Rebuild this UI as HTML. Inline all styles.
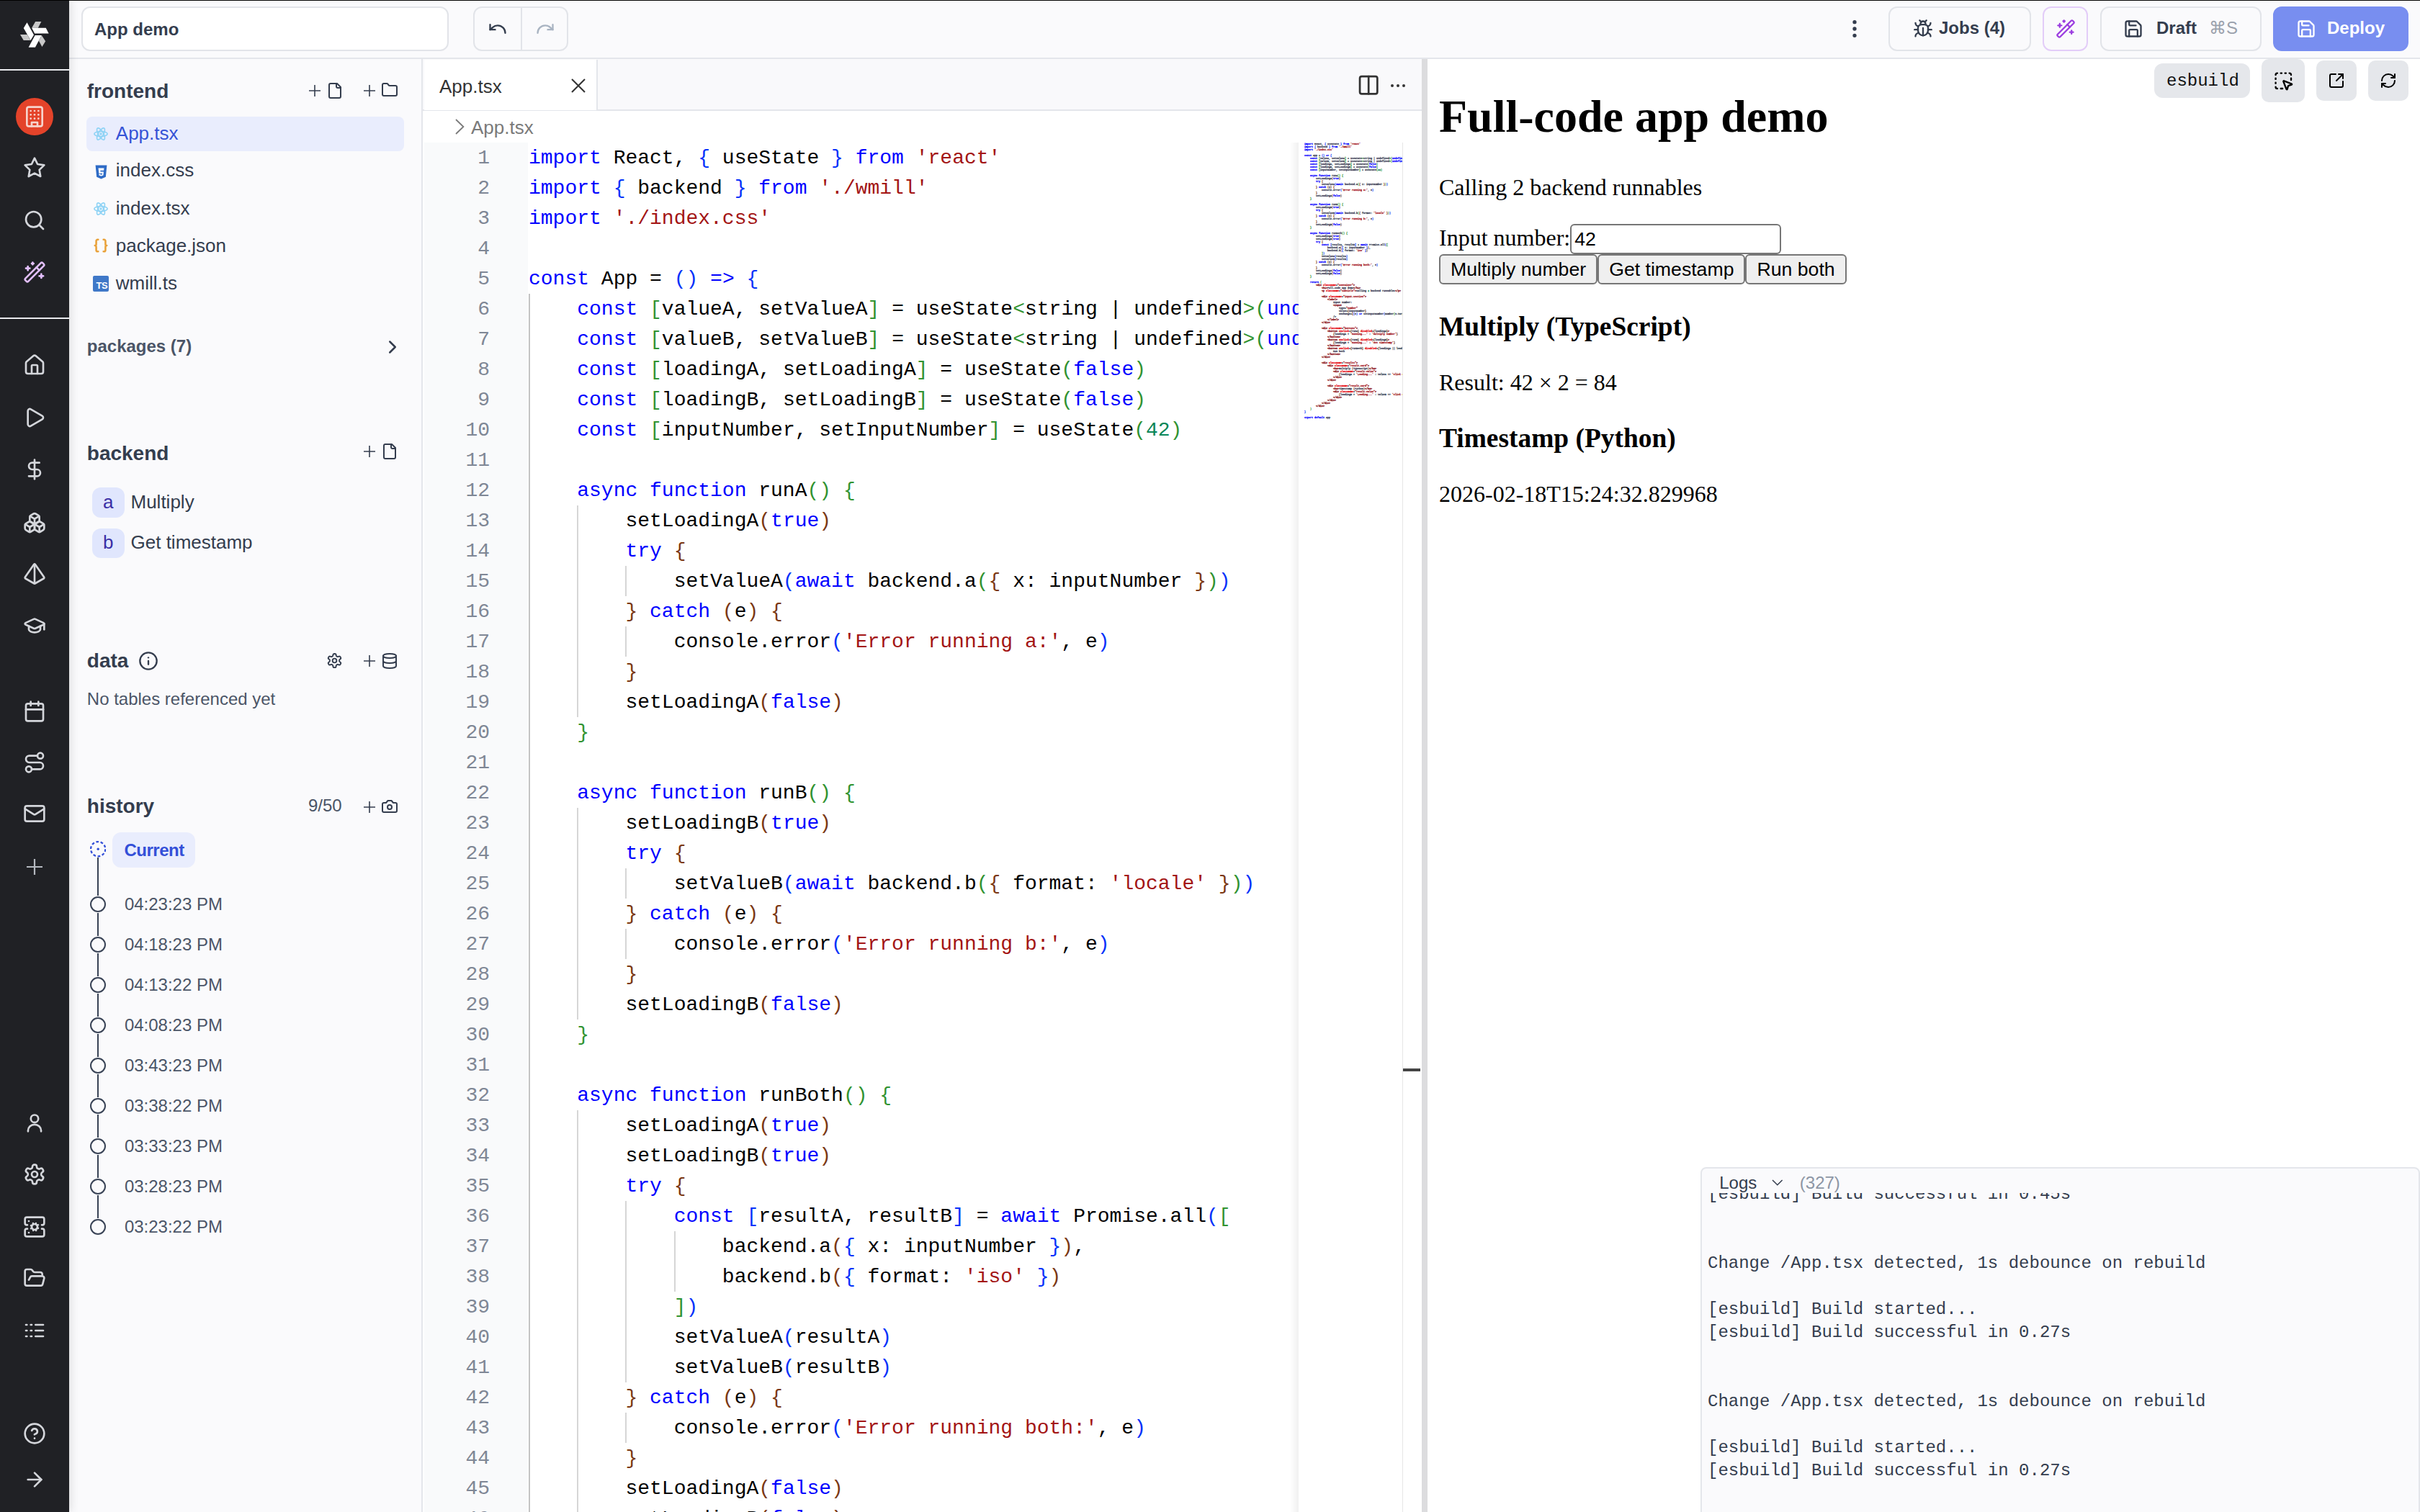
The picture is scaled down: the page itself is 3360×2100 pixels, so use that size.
<!DOCTYPE html><html><head><meta charset="utf-8"><style>html{overflow:hidden}
@media (min-width:2500px){html{zoom:2}}
*{box-sizing:border-box}
body{margin:0;width:1680px;height:1050px;overflow:hidden;position:relative;background:#fff;font-family:"Liberation Sans",sans-serif;color:#343d4e}
.abs{position:absolute}
span.abs{white-space:pre;line-height:16px}
svg.i{position:absolute;fill:none;stroke:currentColor;stroke-width:2;stroke-linecap:round;stroke-linejoin:round;overflow:visible}
#topline{position:absolute;left:0;top:0;width:1680px;height:.5px;background:#000;z-index:50}
#side{position:absolute;left:0;top:0;width:48px;height:1050px;background:#202125;color:#d4d6db;z-index:10;box-shadow:1px 0 6px rgba(0,0,0,.12)}
#side .sep{position:absolute;left:0;width:48px;height:1px;background:#e9eaee}
#topbar{position:absolute;left:48px;top:0;width:1632px;height:41px;background:#fafafc;border-bottom:1px solid #e4e6eb}
.btn{position:absolute;top:4.5px;height:31px;border:1px solid #e2e4e9;border-radius:6px;background:#fafafc}
#files{position:absolute;left:48px;top:41px;width:245.5px;height:1009px;background:#fafafc;border-right:1px solid #e4e6eb}
#editor{position:absolute;left:293.5px;top:41px;width:693.5px;height:1009px;background:#fff}
#splitter{position:absolute;left:987px;top:41px;width:4px;height:1009px;background:#dcdcde}
#preview{position:absolute;left:991px;top:41px;width:689px;height:1009px;background:#fff;overflow:hidden}
div.t{position:absolute;line-height:0;white-space:pre}
#pbody{position:absolute;left:0;top:0;right:0;margin:0 8px;font-family:"Liberation Serif",serif;font-size:16px;color:#000}
#pbody h1{font-size:32px;margin:21.44px 0;font-weight:bold}
#pbody p{margin:16px 0}
#pbody h3{font-size:18.72px;margin:18.72px 0;font-weight:bold}
#pbody .inp{display:inline-block;vertical-align:baseline;width:146.5px;height:21px;border:1px solid #767676;border-radius:3px;font-family:"Liberation Sans",sans-serif;font-size:13.333px;padding:1px 2px;line-height:17px;background:#fff}
#pbody .b{display:inline-block;height:21px;border:1px solid #767676;border-radius:3px;background:#efefef;font-family:"Liberation Sans",sans-serif;font-size:13.333px;padding:1px 7px;line-height:17px;margin-right:0}
#pbody .btns{font-size:0}
</style></head><body>
<div id="topline"></div><div class="abs" style="left:48px;top:.5px;width:1632px;height:.5px;background:#fff;z-index:49"></div>
<div id="side">
<svg class="abs" viewBox="0 0 1512 1512" style="left:5px;top:5px;width:40px;height:40px">
<g fill="#c8c8c8"><polygon points="740,378 895,378 810,545 645,545"/><polygon points="340,720 525,720 610,870 430,870"/><polygon points="905,740 1005,895 915,1040 830,885"/></g>
<g fill="#fff"><polygon points="645,545 1015,545 1090,690 720,690"/><polygon points="520,400 700,730 615,870 430,550"/><polygon points="730,735 905,735 735,1055 560,1055"/></g>
</svg>
<div class="sep" style="top:48px"></div>
<div class="abs" style="left:11px;top:68px;width:26px;height:26px;border-radius:50%;background:#e4432a"></div>
<svg class="i" viewBox="0 0 24 24" style="left:16.0px;top:73.0px;width:16px;height:16px;color:#f6d3cc;" stroke-width="2" ><rect width="16" height="20" x="4" y="2" rx="2" ry="2"/><path d="M9 22v-4h6v4"/><path d="M8 6h.01"/><path d="M16 6h.01"/><path d="M12 6h.01"/><path d="M12 10h.01"/><path d="M12 14h.01"/><path d="M16 10h.01"/><path d="M16 14h.01"/><path d="M8 10h.01"/><path d="M8 14h.01"/></svg>
<svg class="i" viewBox="0 0 24 24" style="left:16.0px;top:108.5px;width:16px;height:16px;" stroke-width="2" ><polygon points="12 2 15.09 8.26 22 9.27 17 14.14 18.18 21.02 12 17.77 5.82 21.02 7 14.14 2 9.27 8.91 8.26 12 2"/></svg>
<svg class="i" viewBox="0 0 24 24" style="left:16.0px;top:145.0px;width:16px;height:16px;" stroke-width="2" ><circle cx="11" cy="11" r="8"/><path d="m21 21-4.3-4.3"/></svg>
<svg class="i" viewBox="0 0 24 24" style="left:16.0px;top:180.75px;width:16px;height:16px;color:#e2bffd;" stroke-width="2" ><path d="m21.64 3.64-1.28-1.28a1.21 1.21 0 0 0-1.72 0L2.36 18.64a1.21 1.21 0 0 0 0 1.72l1.28 1.28a1.2 1.2 0 0 0 1.72 0L21.64 5.36a1.2 1.2 0 0 0 0-1.72"/><path d="m14 7 3 3"/><path d="M5 6v4"/><path d="M19 14v4"/><path d="M10 2v2"/><path d="M7 8H3"/><path d="M21 16h-4"/><path d="M11 3H9"/></svg>
<div class="sep" style="top:220.5px"></div>
<svg class="i" viewBox="0 0 24 24" style="left:16.0px;top:245.5px;width:16px;height:16px;" stroke-width="2" ><path d="M15 21v-8a1 1 0 0 0-1-1h-4a1 1 0 0 0-1 1v8"/><path d="M3 10a2 2 0 0 1 .709-1.528l7-5.999a2 2 0 0 1 2.582 0l7 5.999A2 2 0 0 1 21 10v9a2 2 0 0 1-2 2H5a2 2 0 0 1-2-2z"/></svg>
<svg class="i" viewBox="0 0 24 24" style="left:16.0px;top:282.0px;width:16px;height:16px;" stroke-width="2" ><path d="M5 5a2 2 0 0 1 3.008-1.728l11.997 6.998a2 2 0 0 1 .003 3.458l-12 7A2 2 0 0 1 5 19z"/></svg>
<svg class="i" viewBox="0 0 24 24" style="left:16.0px;top:318.0px;width:16px;height:16px;" stroke-width="2" ><line x1="12" x2="12" y1="2" y2="22"/><path d="M17 5H9.5a3.5 3.5 0 0 0 0 7h5a3.5 3.5 0 0 1 0 7H6"/></svg>
<svg class="i" viewBox="0 0 24 24" style="left:16.0px;top:355.0px;width:16px;height:16px;" stroke-width="2" ><path d="M2.97 12.92A2 2 0 0 0 2 14.63v3.24a2 2 0 0 0 .97 1.71l3 1.8a2 2 0 0 0 2.06 0L12 19v-5.5l-5-3-4.03 2.42Z"/><path d="m7 16.5-4.74-2.85"/><path d="m7 16.5 5-3"/><path d="M7 16.5v5.17"/><path d="M12 13.5V19l3.97 2.38a2 2 0 0 0 2.06 0l3-1.8a2 2 0 0 0 .97-1.71v-3.24a2 2 0 0 0-.97-1.71L17 10.5l-5 3Z"/><path d="m17 16.5-5-3"/><path d="m17 16.5 4.74-2.85"/><path d="M17 16.5v5.17"/><path d="M7.97 4.42A2 2 0 0 0 7 6.13v4.37l5 3 5-3V6.13a2 2 0 0 0-.97-1.71l-3-1.8a2 2 0 0 0-2.06 0l-3 1.8Z"/><path d="M12 8 7.26 5.15"/><path d="m12 8 4.74-2.85"/><path d="M12 13.5V8"/></svg>
<svg class="i" viewBox="0 0 24 24" style="left:16.0px;top:390.5px;width:16px;height:16px;" stroke-width="2" ><path d="M2.5 16.88a1 1 0 0 1-.32-1.43l9-13.02a1 1 0 0 1 1.64 0l9 13.01a1 1 0 0 1-.32 1.44l-8.51 4.86a2 2 0 0 1-1.98 0Z"/><path d="M12 2v20"/></svg>
<svg class="i" viewBox="0 0 24 24" style="left:16.0px;top:426.5px;width:16px;height:16px;" stroke-width="2" ><path d="M21.42 10.922a1 1 0 0 0-.019-1.838L12.83 5.18a2 2 0 0 0-1.66 0L2.6 9.08a1 1 0 0 0 0 1.832l8.57 3.908a2 2 0 0 0 1.66 0z"/><path d="M22 10v6"/><path d="M6 12.5V16a6 3 0 0 0 12 0v-3.5"/></svg>
<svg class="i" viewBox="0 0 24 24" style="left:16.0px;top:486.0px;width:16px;height:16px;" stroke-width="2" ><path d="M8 2v4"/><path d="M16 2v4"/><rect width="18" height="18" x="3" y="4" rx="2"/><path d="M3 10h18"/></svg>
<svg class="i" viewBox="0 0 24 24" style="left:16.0px;top:521.5px;width:16px;height:16px;" stroke-width="2" ><circle cx="6" cy="19" r="3"/><path d="M9 19h8.5a3.5 3.5 0 0 0 0-7h-11a3.5 3.5 0 0 1 0-7H15"/><circle cx="18" cy="5" r="3"/></svg>
<svg class="i" viewBox="0 0 24 24" style="left:16.0px;top:557.0px;width:16px;height:16px;" stroke-width="2" ><rect width="20" height="16" x="2" y="4" rx="2"/><path d="m22 7-8.97 5.7a1.94 1.94 0 0 1-2.06 0L2 7"/></svg>
<svg class="abs" style="left:18.5px;top:596.5px;width:11px;height:11px;overflow:visible" viewBox="0 0 11 11"><path d="M0 5.5H11M5.5 0V11" stroke="#b4b8bf" stroke-width="1.1" fill="none"/></svg>
<svg class="i" viewBox="0 0 24 24" style="left:16.0px;top:772.0px;width:16px;height:16px;" stroke-width="2" ><circle cx="12" cy="7.3" r="3.9"/><path d="M5.2 20.5v-.8a6.8 6.3 0 0 1 13.6 0v.8"/></svg>
<svg class="i" viewBox="0 0 24 24" style="left:16.0px;top:807.5px;width:16px;height:16px;" stroke-width="2" ><path d="M12.22 2h-.44a2 2 0 0 0-2 2v.18a2 2 0 0 1-1 1.73l-.43.25a2 2 0 0 1-2 0l-.15-.08a2 2 0 0 0-2.73.73l-.22.38a2 2 0 0 0 .73 2.73l.15.1a2 2 0 0 1 1 1.72v.51a2 2 0 0 1-1 1.74l-.15.09a2 2 0 0 0-.73 2.73l.22.38a2 2 0 0 0 2.73.73l.15-.08a2 2 0 0 1 2 0l.43.25a2 2 0 0 1 1 1.73V20a2 2 0 0 0 2 2h.44a2 2 0 0 0 2-2v-.18a2 2 0 0 1 1-1.73l.43-.25a2 2 0 0 1 2 0l.15.08a2 2 0 0 0 2.73-.73l.22-.39a2 2 0 0 0-.73-2.73l-.15-.08a2 2 0 0 1-1-1.74v-.5a2 2 0 0 1 1-1.74l.15-.09a2 2 0 0 0 .73-2.73l-.22-.38a2 2 0 0 0-2.73-.73l-.15.08a2 2 0 0 1-2 0l-.43-.25a2 2 0 0 1-1-1.73V4a2 2 0 0 0-2-2z"/><circle cx="12" cy="12" r="3"/></svg>
<svg class="i" viewBox="0 0 24 24" style="left:16.0px;top:844.0px;width:16px;height:16px;" stroke-width="2" ><circle cx="12" cy="12" r="3"/><path d="M4.5 10H4a2 2 0 0 1-2-2V4a2 2 0 0 1 2-2h16a2 2 0 0 1 2 2v4a2 2 0 0 1-2 2h-.5"/><path d="M4.5 14H4a2 2 0 0 0-2 2v4a2 2 0 0 0 2 2h16a2 2 0 0 0 2-2v-4a2 2 0 0 0-2-2h-.5"/><path d="M6 6h.01"/><path d="M6 18h.01"/><path d="m15.7 13.4-.9-.3"/><path d="m9.2 10.9-.9-.3"/><path d="m10.6 15.7.3-.9"/><path d="m13.6 15.7-.4-1"/><path d="m10.8 9.3-.4-1"/><path d="m8.3 13.6 1-.4"/><path d="m14.7 10.4 1-.4"/><path d="m13.4 8.3-.3.9"/></svg>
<svg class="i" viewBox="0 0 24 24" style="left:16.0px;top:879.5px;width:16px;height:16px;" stroke-width="2" ><path d="m6 14 1.5-2.9A2 2 0 0 1 9.24 10H20a2 2 0 0 1 1.94 2.5l-1.54 6a2 2 0 0 1-1.95 1.5H4a2 2 0 0 1-2-2V5a2 2 0 0 1 2-2h3.9a2 2 0 0 1 1.69.9l.81 1.2a2 2 0 0 0 1.67.9H18a2 2 0 0 1 2 2v2"/></svg>
<svg class="i" viewBox="0 0 24 24" style="left:16.0px;top:915.8px;width:16px;height:16px;" stroke-width="2" ><path d="M13 12h8"/><path d="M13 18h8"/><path d="M13 6h8"/><path d="M3 12h1"/><path d="M3 18h1"/><path d="M3 6h1"/><path d="M8 12h1"/><path d="M8 18h1"/><path d="M8 6h1"/></svg>
<svg class="i" viewBox="0 0 24 24" style="left:16.0px;top:987.5px;width:16px;height:16px;" stroke-width="2" ><circle cx="12" cy="12" r="10"/><path d="M9.09 9a3 3 0 0 1 5.83 1c0 2-3 3-3 3"/><path d="M12 17h.01"/></svg>
<svg class="i" viewBox="0 0 24 24" style="left:16.0px;top:1019.3px;width:16px;height:16px;" stroke-width="2" ><path d="M5 12h14"/><path d="m12 5 7 7-7 7"/></svg>
</div>
<div id="topbar">
<div class="btn" style="left:8.5px;width:255px;background:#fff"><div class="t" style="left:8.00px;top:14.84px;font-size:12px;color:#343d4e;font-weight:bold;">App demo</div></div>
<div class="btn" style="left:280.5px;width:66px"><div class="abs" style="left:32px;top:0;width:1px;height:29px;background:#e2e4e9"></div>
<svg class="i" viewBox="0 0 24 24" style="left:9.0px;top:7.5px;width:14px;height:14px;color:#343d4e;" stroke-width="2" ><path d="M3 7v6h6"/><path d="M21 17a9 9 0 0 0-9-9 9 9 0 0 0-6 2.3L3 13"/></svg>
<svg class="i" viewBox="0 0 24 24" style="left:42.0px;top:7.5px;width:14px;height:14px;color:#a9b4c2;" stroke-width="2" ><path d="M21 7v6h-6"/><path d="M3 17a9 9 0 0 1 9-9 9 9 0 0 1 6 2.3l3 2.7"/></svg>
</div>
<svg class="i" viewBox="0 0 24 24" style="left:1231.5px;top:12.0px;width:16px;height:16px;color:#343d4e;" stroke-width="2" ><circle cx="12" cy="12" r="1"/><circle cx="12" cy="5" r="1"/><circle cx="12" cy="19" r="1"/></svg>
<div class="btn" style="left:1263px;width:99px"><svg class="i" viewBox="0 0 24 24" style="left:16.0px;top:7.5px;width:14px;height:14px;color:#343d4e;" stroke-width="2" ><path d="m8 2 1.88 1.88"/><path d="M14.12 3.88 16 2"/><path d="M9 7.13v-1a3.003 3.003 0 1 1 6 0v1"/><path d="M12 20c-3.3 0-6-2.7-6-6v-3a4 4 0 0 1 4-4h4a4 4 0 0 1 4 4v3c0 3.3-2.7 6-6 6"/><path d="M12 20v-9"/><path d="M6.53 9C4.6 8.8 3 7.1 3 5"/><path d="M6 13H2"/><path d="M3 21c0-2.1 1.7-3.9 3.8-4"/><path d="M20.97 5c0 2.1-1.6 3.8-3.5 4"/><path d="M22 13h-4"/><path d="M17.2 17c2.1.1 3.8 1.9 3.8 4"/></svg><div class="t" style="left:34.00px;top:14.19px;font-size:12px;color:#343d4e;font-weight:bold;">Jobs (4)</div></div>
<div class="btn" style="left:1370px;width:31.5px;border-color:#e3cdf8"><svg class="i" viewBox="0 0 24 24" style="left:8.0px;top:7.5px;width:14px;height:14px;color:#9b3de0;" stroke-width="2" ><path d="m21.64 3.64-1.28-1.28a1.21 1.21 0 0 0-1.72 0L2.36 18.64a1.21 1.21 0 0 0 0 1.72l1.28 1.28a1.2 1.2 0 0 0 1.72 0L21.64 5.36a1.2 1.2 0 0 0 0-1.72"/><path d="m14 7 3 3"/><path d="M5 6v4"/><path d="M19 14v4"/><path d="M10 2v2"/><path d="M7 8H3"/><path d="M21 16h-4"/><path d="M11 3H9"/></svg></div>
<div class="btn" style="left:1410px;width:112px"><svg class="i" viewBox="0 0 24 24" style="left:15.0px;top:7.5px;width:14px;height:14px;color:#343d4e;" stroke-width="2" ><path d="M15.2 3a2 2 0 0 1 1.4.6l3.8 3.8a2 2 0 0 1 .6 1.4V19a2 2 0 0 1-2 2H5a2 2 0 0 1-2-2V5a2 2 0 0 1 2-2z"/><path d="M17 21v-7a1 1 0 0 0-1-1H8a1 1 0 0 0-1 1v7"/><path d="M7 3v4a1 1 0 0 0 1 1h7"/></svg><div class="t" style="left:38.00px;top:14.19px;font-size:12px;color:#343d4e;font-weight:bold;">Draft</div><div class="t" style="left:74.50px;top:14.19px;font-size:12px;color:#9aa1ac;">⌘S</div></div>
<div class="btn" style="left:1530px;width:94px;background:#788ef0;border-color:#788ef0"><svg class="i" viewBox="0 0 24 24" style="left:15.0px;top:7.5px;width:14px;height:14px;color:#fff;" stroke-width="2" ><path d="M15.2 3a2 2 0 0 1 1.4.6l3.8 3.8a2 2 0 0 1 .6 1.4V19a2 2 0 0 1-2 2H5a2 2 0 0 1-2-2V5a2 2 0 0 1 2-2z"/><path d="M17 21v-7a1 1 0 0 0-1-1H8a1 1 0 0 0-1 1v7"/><path d="M7 3v4a1 1 0 0 0 1 1h7"/></svg><div class="t" style="left:36.50px;top:14.19px;font-size:12px;color:#fff;font-weight:bold;">Deploy</div></div>
</div>
<div id="files">
<div class="t" style="left:12.40px;top:22.65px;font-size:14px;color:#343d4e;font-weight:bold;">frontend</div>
<svg class="abs" style="left:166.5px;top:18.0px;width:8px;height:8px;overflow:visible" viewBox="0 0 8 8"><path d="M0 4.0H8M4.0 0V8" stroke="#343d4e" stroke-width="0.8" fill="none"/></svg>
<svg class="i" viewBox="0 0 24 24" style="left:178.5px;top:16.0px;width:12px;height:12px;color:#343d4e;" stroke-width="2" ><path d="M15 2H6a2 2 0 0 0-2 2v16a2 2 0 0 0 2 2h12a2 2 0 0 0 2-2V7Z"/><path d="M14 2v4a2 2 0 0 0 2 2h4"/></svg>
<svg class="abs" style="left:204.5px;top:18.0px;width:8px;height:8px;overflow:visible" viewBox="0 0 8 8"><path d="M0 4.0H8M4.0 0V8" stroke="#343d4e" stroke-width="0.8" fill="none"/></svg>
<svg class="i" viewBox="0 0 24 24" style="left:216.5px;top:15.700000000000003px;width:12px;height:12px;color:#343d4e;" stroke-width="2" ><path d="M20 20a2 2 0 0 0 2-2V8a2 2 0 0 0-2-2h-7.9a2 2 0 0 1-1.69-.9L9.6 3.9A2 2 0 0 0 7.93 3H4a2 2 0 0 0-2 2v13a2 2 0 0 0 2 2Z"/></svg>
<div class="abs" style="left:12px;top:40.099999999999994px;width:220.5px;height:23.75px;background:#e9edfd;border-radius:4px"></div>
<svg class="i" viewBox="0 0 24 24" style="left:17.0px;top:47.0px;width:10px;height:10px;color:#8fd3f5;" stroke-width="1.2" ><circle cx="12" cy="12" r="2" fill="currentColor" stroke="none"/><ellipse cx="12" cy="12" rx="11" ry="4.2"/><ellipse cx="12" cy="12" rx="11" ry="4.2" transform="rotate(60 12 12)"/><ellipse cx="12" cy="12" rx="11" ry="4.2" transform="rotate(120 12 12)"/></svg>
<svg class="i" viewBox="0 0 24 24" style="left:17.0px;top:98.80000000000001px;width:10px;height:10px;color:#8fd3f5;" stroke-width="1.2" ><circle cx="12" cy="12" r="2" fill="currentColor" stroke="none"/><ellipse cx="12" cy="12" rx="11" ry="4.2"/><ellipse cx="12" cy="12" rx="11" ry="4.2" transform="rotate(60 12 12)"/><ellipse cx="12" cy="12" rx="11" ry="4.2" transform="rotate(120 12 12)"/></svg>
<div class="t" style="left:32.40px;top:51.60px;font-size:13px;color:#3553d6;">App.tsx</div>
<div class="t" style="left:32.40px;top:77.15px;font-size:13px;color:#343d4e;">index.css</div>
<div class="t" style="left:32.40px;top:103.40px;font-size:13px;color:#343d4e;">index.tsx</div>
<div class="t" style="left:32.40px;top:129.60px;font-size:13px;color:#343d4e;">package.json</div>
<div class="t" style="left:32.40px;top:155.40px;font-size:13px;color:#343d4e;">wmill.ts</div>
<svg class="abs" viewBox="0 0 24 24" style="left:17.299999999999997px;top:73px;width:9.5px;height:11px"><path d="M2 0h20l-2 20.5L12 24l-8-3.5z" fill="#2e6bc6"/><path d="M7 5h10l-.4 4H10.5l.2 2.3h5.6l-.6 6.5L12 19l-3.8-1.3-.25-2.7h2.3l.1 1.2 1.65.5 1.7-.5.2-2.1H8z" fill="#fff"/></svg>
<svg class="abs" viewBox="0 0 24 24" style="left:16.5px;top:124px;width:11px;height:11px"><path d="M8 3H7a2 2 0 0 0-2 2v5a2 2 0 0 1-2 2 2 2 0 0 1 2 2v5c0 1.1.9 2 2 2h1M16 21h1a2 2 0 0 0 2-2v-5c0-1.1.9-2 2-2a2 2 0 0 1-2-2V5a2 2 0 0 0-2-2h-1" stroke="#e9a23b" stroke-width="2.8" fill="none" stroke-linecap="round" stroke-linejoin="round"/></svg>
<div class="abs" style="left:16.5px;top:150.5px;width:11px;height:11px;background:#3f78c8;border-radius:1px"><div class="t" style="left:2.2px;top:6.8px;font-size:6.5px;font-weight:bold;color:#fff;letter-spacing:-.2px">TS</div></div>
<div class="t" style="left:12.40px;top:199.59px;font-size:12px;color:#4b5567;font-weight:bold;">packages (7)</div>
<svg class="i" viewBox="0 0 24 24" style="left:217.2px;top:192.5px;width:15px;height:15px;color:#343d4e;" stroke-width="2.3" ><path d="m9 18 6-6-6-6"/></svg>
<div class="t" style="left:12.40px;top:274.15px;font-size:14px;color:#343d4e;font-weight:bold;">backend</div>
<svg class="abs" style="left:204.5px;top:268.5px;width:8px;height:8px;overflow:visible" viewBox="0 0 8 8"><path d="M0 4.0H8M4.0 0V8" stroke="#343d4e" stroke-width="0.8" fill="none"/></svg>
<svg class="i" viewBox="0 0 24 24" style="left:216.5px;top:266.5px;width:12px;height:12px;color:#343d4e;" stroke-width="2" ><path d="M15 2H6a2 2 0 0 0-2 2v16a2 2 0 0 0 2 2h12a2 2 0 0 0 2-2V7Z"/><path d="M14 2v4a2 2 0 0 0 2 2h4"/></svg>
<div class="abs" style="left:16px;top:297.6px;width:22.25px;height:20.8px;background:#e0e6fd;border-radius:6px"></div>
<div class="t" style="left:23.50px;top:307.25px;font-size:13px;color:#3a2fa6;">a</div>
<div class="t" style="left:42.75px;top:307.25px;font-size:13px;color:#343d4e;">Multiply</div>
<div class="abs" style="left:16px;top:325.8px;width:22.25px;height:20.8px;background:#e0e6fd;border-radius:6px"></div>
<div class="t" style="left:23.50px;top:335.35px;font-size:13px;color:#3a2fa6;">b</div>
<div class="t" style="left:42.75px;top:335.35px;font-size:13px;color:#343d4e;">Get timestamp</div>
<div class="t" style="left:12.40px;top:418.00px;font-size:14px;color:#343d4e;font-weight:bold;">data</div>
<svg class="i" viewBox="0 0 24 24" style="left:48.0px;top:410.8px;width:14px;height:14px;color:#343d4e;" stroke-width="1.8" ><circle cx="12" cy="12" r="10"/><path d="M12 16v-4"/><path d="M12 8h.01"/></svg>
<svg class="i" viewBox="0 0 24 24" style="left:178.5px;top:412.0px;width:11.5px;height:11.5px;color:#343d4e;" stroke-width="2" ><path d="M12.22 2h-.44a2 2 0 0 0-2 2v.18a2 2 0 0 1-1 1.73l-.43.25a2 2 0 0 1-2 0l-.15-.08a2 2 0 0 0-2.73.73l-.22.38a2 2 0 0 0 .73 2.73l.15.1a2 2 0 0 1 1 1.72v.51a2 2 0 0 1-1 1.74l-.15.09a2 2 0 0 0-.73 2.73l.22.38a2 2 0 0 0 2.73.73l.15-.08a2 2 0 0 1 2 0l.43.25a2 2 0 0 1 1 1.73V20a2 2 0 0 0 2 2h.44a2 2 0 0 0 2-2v-.18a2 2 0 0 1 1-1.73l.43-.25a2 2 0 0 1 2 0l.15.08a2 2 0 0 0 2.73-.73l.22-.39a2 2 0 0 0-.73-2.73l-.15-.08a2 2 0 0 1-1-1.74v-.5a2 2 0 0 1 1-1.74l.15-.09a2 2 0 0 0 .73-2.73l-.22-.38a2 2 0 0 0-2.73-.73l-.15.08a2 2 0 0 1-2 0l-.43-.25a2 2 0 0 1-1-1.73V4a2 2 0 0 0-2-2z"/><circle cx="12" cy="12" r="3"/></svg>
<svg class="abs" style="left:204.5px;top:414.0px;width:8px;height:8px;overflow:visible" viewBox="0 0 8 8"><path d="M0 4.0H8M4.0 0V8" stroke="#343d4e" stroke-width="0.8" fill="none"/></svg>
<svg class="i" viewBox="0 0 24 24" style="left:216.5px;top:411.75px;width:12px;height:12px;color:#343d4e;" stroke-width="2" ><ellipse cx="12" cy="5" rx="9" ry="3"/><path d="M3 5V19A9 3 0 0 0 21 19V5"/><path d="M3 12A9 3 0 0 0 21 12"/></svg>
<div class="t" style="left:12.40px;top:444.34px;font-size:12px;color:#4b5567;">No tables referenced yet</div>
<div class="t" style="left:12.40px;top:518.90px;font-size:14px;color:#343d4e;font-weight:bold;">history</div>
<div class="t" style="left:166.00px;top:518.44px;font-size:12px;color:#4b5567;">9/50</div>
<svg class="abs" style="left:204.5px;top:515.3px;width:8px;height:8px;overflow:visible" viewBox="0 0 8 8"><path d="M0 4.0H8M4.0 0V8" stroke="#343d4e" stroke-width="0.8" fill="none"/></svg>
<svg class="i" viewBox="0 0 24 24" style="left:216.3px;top:512.9px;width:12px;height:12px;color:#343d4e;" stroke-width="2" ><path d="M14.5 4h-5L7 7H4a2 2 0 0 0-2 2v9a2 2 0 0 0 2 2h16a2 2 0 0 0 2-2V9a2 2 0 0 0-2-2h-3l-2.5-3z"/><circle cx="12" cy="13" r="3"/></svg>
<div class="abs" style="left:30px;top:537px;width:57.3px;height:24.5px;background:#e9edfd;border-radius:6px"></div>
<div class="t" style="left:38.25px;top:549.34px;font-size:12px;color:#3450d8;font-weight:bold;letter-spacing:-.25px">Current</div>
<svg class="abs" style="left:14.399999999999999px;top:543.1999999999999px;width:11.2px;height:11.2px" viewBox="0 0 21 21"><circle cx="10.5" cy="10.5" r="9.5" fill="none" stroke="#3450d8" stroke-width="2.2" stroke-dasharray="3.5 2.47"/><circle cx="10.5" cy="10.5" r="1.6" fill="#3450d8"/></svg>
<div class="abs" style="left:19.625px;top:554.5px;width:.75px;height:26.5px;background:#394356"></div>
<div class="abs" style="left:14.350000000000001px;top:581.25px;width:11.3px;height:11.3px;border:1px solid #394356;border-radius:50%"></div>
<div class="t" style="left:38.45px;top:587.14px;font-size:12px;color:#4b5567;">04:23:23 PM</div>
<div class="abs" style="left:19.625px;top:592.8px;width:.75px;height:16.200000000000045px;background:#394356"></div>
<div class="abs" style="left:14.350000000000001px;top:609.25px;width:11.3px;height:11.3px;border:1px solid #394356;border-radius:50%"></div>
<div class="t" style="left:38.45px;top:615.14px;font-size:12px;color:#4b5567;">04:18:23 PM</div>
<div class="abs" style="left:19.625px;top:620.8px;width:.75px;height:16.200000000000045px;background:#394356"></div>
<div class="abs" style="left:14.350000000000001px;top:637.25px;width:11.3px;height:11.3px;border:1px solid #394356;border-radius:50%"></div>
<div class="t" style="left:38.45px;top:643.14px;font-size:12px;color:#4b5567;">04:13:22 PM</div>
<div class="abs" style="left:19.625px;top:648.8px;width:.75px;height:16.200000000000045px;background:#394356"></div>
<div class="abs" style="left:14.350000000000001px;top:665.25px;width:11.3px;height:11.3px;border:1px solid #394356;border-radius:50%"></div>
<div class="t" style="left:38.45px;top:671.14px;font-size:12px;color:#4b5567;">04:08:23 PM</div>
<div class="abs" style="left:19.625px;top:676.8px;width:.75px;height:16.200000000000045px;background:#394356"></div>
<div class="abs" style="left:14.350000000000001px;top:693.25px;width:11.3px;height:11.3px;border:1px solid #394356;border-radius:50%"></div>
<div class="t" style="left:38.45px;top:699.14px;font-size:12px;color:#4b5567;">03:43:23 PM</div>
<div class="abs" style="left:19.625px;top:704.8px;width:.75px;height:16.200000000000045px;background:#394356"></div>
<div class="abs" style="left:14.350000000000001px;top:721.25px;width:11.3px;height:11.3px;border:1px solid #394356;border-radius:50%"></div>
<div class="t" style="left:38.45px;top:727.14px;font-size:12px;color:#4b5567;">03:38:22 PM</div>
<div class="abs" style="left:19.625px;top:732.8px;width:.75px;height:16.200000000000045px;background:#394356"></div>
<div class="abs" style="left:14.350000000000001px;top:749.25px;width:11.3px;height:11.3px;border:1px solid #394356;border-radius:50%"></div>
<div class="t" style="left:38.45px;top:755.14px;font-size:12px;color:#4b5567;">03:33:23 PM</div>
<div class="abs" style="left:19.625px;top:760.8px;width:.75px;height:16.200000000000045px;background:#394356"></div>
<div class="abs" style="left:14.350000000000001px;top:777.25px;width:11.3px;height:11.3px;border:1px solid #394356;border-radius:50%"></div>
<div class="t" style="left:38.45px;top:783.14px;font-size:12px;color:#4b5567;">03:28:23 PM</div>
<div class="abs" style="left:19.625px;top:788.8px;width:.75px;height:16.200000000000045px;background:#394356"></div>
<div class="abs" style="left:14.350000000000001px;top:805.25px;width:11.3px;height:11.3px;border:1px solid #394356;border-radius:50%"></div>
<div class="t" style="left:38.45px;top:811.14px;font-size:12px;color:#4b5567;">03:23:22 PM</div>
</div>
<div id="editor">
<div class="abs" style="left:0;top:0;width:693.5px;height:36px;background:#f9f9fb;border-bottom:1px solid #e4e6eb"></div>
<div class="abs" style="left:1px;top:0.5px;width:120.25px;height:35px;background:#fff;border-right:1px solid #e4e6eb"></div>
<div class="t" style="left:11.50px;top:19.00px;font-size:13px;color:#333333;">App.tsx</div>
<svg class="abs" style="left:103.5px;top:14.0px;width:9px;height:9px;overflow:visible" viewBox="0 0 9 9"><path d="M0 0L9 9M9 0L0 9" stroke="#333" stroke-width="1.05" fill="none"/></svg>
<svg class="i" viewBox="0 0 24 24" style="left:648.65px;top:10.15px;width:16.2px;height:16.2px;color:#333333;" stroke-width="2.1" ><rect width="18" height="18" x="3" y="3" rx="2"/><path d="M12 3v18"/></svg>
<div class="abs" style="left:672.1px;top:17.5px;width:2px;height:2px;border-radius:50%;background:#333"></div>
<div class="abs" style="left:676.1px;top:17.5px;width:2px;height:2px;border-radius:50%;background:#333"></div>
<div class="abs" style="left:680.1px;top:17.5px;width:2px;height:2px;border-radius:50%;background:#333"></div>
<svg class="abs" style="left:23.0px;top:42px;width:5.5px;height:10px;overflow:visible" viewBox="0 0 5.5 10"><path d="M0 0L5.2 5L0 10" stroke="#7a7a7a" stroke-width=".9" fill="none"/></svg>
<div class="t" style="left:33.50px;top:47.50px;font-size:13px;color:#7a7a7a;">App.tsx</div>
<div class="abs" style="left:1px;top:58px;width:72.0px;height:1000px;background:#f9fafb"></div>
<div class="abs" style="left:6.5px;top:0;width:40px;height:1009px;font-family:'Liberation Mono',monospace;font-size:14px;color:#7f8795"><div class="t" style="left:0;width:40px;text-align:right;top:69.07px">1</div><div class="t" style="left:0;width:40px;text-align:right;top:90.07px">2</div><div class="t" style="left:0;width:40px;text-align:right;top:111.07px">3</div><div class="t" style="left:0;width:40px;text-align:right;top:132.07px">4</div><div class="t" style="left:0;width:40px;text-align:right;top:153.07px">5</div><div class="t" style="left:0;width:40px;text-align:right;top:174.07px">6</div><div class="t" style="left:0;width:40px;text-align:right;top:195.07px">7</div><div class="t" style="left:0;width:40px;text-align:right;top:216.07px">8</div><div class="t" style="left:0;width:40px;text-align:right;top:237.07px">9</div><div class="t" style="left:0;width:40px;text-align:right;top:258.07px">10</div><div class="t" style="left:0;width:40px;text-align:right;top:279.07px">11</div><div class="t" style="left:0;width:40px;text-align:right;top:300.07px">12</div><div class="t" style="left:0;width:40px;text-align:right;top:321.07px">13</div><div class="t" style="left:0;width:40px;text-align:right;top:342.07px">14</div><div class="t" style="left:0;width:40px;text-align:right;top:363.07px">15</div><div class="t" style="left:0;width:40px;text-align:right;top:384.07px">16</div><div class="t" style="left:0;width:40px;text-align:right;top:405.07px">17</div><div class="t" style="left:0;width:40px;text-align:right;top:426.07px">18</div><div class="t" style="left:0;width:40px;text-align:right;top:447.07px">19</div><div class="t" style="left:0;width:40px;text-align:right;top:468.07px">20</div><div class="t" style="left:0;width:40px;text-align:right;top:489.07px">21</div><div class="t" style="left:0;width:40px;text-align:right;top:510.07px">22</div><div class="t" style="left:0;width:40px;text-align:right;top:531.07px">23</div><div class="t" style="left:0;width:40px;text-align:right;top:552.07px">24</div><div class="t" style="left:0;width:40px;text-align:right;top:573.07px">25</div><div class="t" style="left:0;width:40px;text-align:right;top:594.07px">26</div><div class="t" style="left:0;width:40px;text-align:right;top:615.07px">27</div><div class="t" style="left:0;width:40px;text-align:right;top:636.07px">28</div><div class="t" style="left:0;width:40px;text-align:right;top:657.07px">29</div><div class="t" style="left:0;width:40px;text-align:right;top:678.07px">30</div><div class="t" style="left:0;width:40px;text-align:right;top:699.07px">31</div><div class="t" style="left:0;width:40px;text-align:right;top:720.07px">32</div><div class="t" style="left:0;width:40px;text-align:right;top:741.07px">33</div><div class="t" style="left:0;width:40px;text-align:right;top:762.07px">34</div><div class="t" style="left:0;width:40px;text-align:right;top:783.07px">35</div><div class="t" style="left:0;width:40px;text-align:right;top:804.07px">36</div><div class="t" style="left:0;width:40px;text-align:right;top:825.07px">37</div><div class="t" style="left:0;width:40px;text-align:right;top:846.07px">38</div><div class="t" style="left:0;width:40px;text-align:right;top:867.07px">39</div><div class="t" style="left:0;width:40px;text-align:right;top:888.07px">40</div><div class="t" style="left:0;width:40px;text-align:right;top:909.07px">41</div><div class="t" style="left:0;width:40px;text-align:right;top:930.07px">42</div><div class="t" style="left:0;width:40px;text-align:right;top:951.07px">43</div><div class="t" style="left:0;width:40px;text-align:right;top:972.07px">44</div><div class="t" style="left:0;width:40px;text-align:right;top:993.07px">45</div><div class="t" style="left:0;width:40px;text-align:right;top:1014.07px">46</div></div>
<div class="abs" style="left:73.0px;top:58px;width:535.0px;height:951px;overflow:hidden;font-family:'Liberation Mono',monospace;font-size:14px">
<div class="abs" style="left:0.50px;top:105px;width:1px;height:21px;background:#c4c4c4"></div>
<div class="abs" style="left:0.50px;top:126px;width:1px;height:21px;background:#c4c4c4"></div>
<div class="abs" style="left:0.50px;top:147px;width:1px;height:21px;background:#c4c4c4"></div>
<div class="abs" style="left:0.50px;top:168px;width:1px;height:21px;background:#c4c4c4"></div>
<div class="abs" style="left:0.50px;top:189px;width:1px;height:21px;background:#c4c4c4"></div>
<div class="abs" style="left:0.50px;top:210px;width:1px;height:21px;background:#c4c4c4"></div>
<div class="abs" style="left:0.50px;top:231px;width:1px;height:21px;background:#c4c4c4"></div>
<div class="abs" style="left:0.50px;top:252px;width:1px;height:21px;background:#c4c4c4"></div>
<div class="abs" style="left:34.10px;top:252px;width:1px;height:21px;background:#d6d6d6"></div>
<div class="abs" style="left:0.50px;top:273px;width:1px;height:21px;background:#c4c4c4"></div>
<div class="abs" style="left:34.10px;top:273px;width:1px;height:21px;background:#d6d6d6"></div>
<div class="abs" style="left:0.50px;top:294px;width:1px;height:21px;background:#c4c4c4"></div>
<div class="abs" style="left:34.10px;top:294px;width:1px;height:21px;background:#d6d6d6"></div>
<div class="abs" style="left:67.70px;top:294px;width:1px;height:21px;background:#d6d6d6"></div>
<div class="abs" style="left:0.50px;top:315px;width:1px;height:21px;background:#c4c4c4"></div>
<div class="abs" style="left:34.10px;top:315px;width:1px;height:21px;background:#d6d6d6"></div>
<div class="abs" style="left:0.50px;top:336px;width:1px;height:21px;background:#c4c4c4"></div>
<div class="abs" style="left:34.10px;top:336px;width:1px;height:21px;background:#d6d6d6"></div>
<div class="abs" style="left:67.70px;top:336px;width:1px;height:21px;background:#d6d6d6"></div>
<div class="abs" style="left:0.50px;top:357px;width:1px;height:21px;background:#c4c4c4"></div>
<div class="abs" style="left:34.10px;top:357px;width:1px;height:21px;background:#d6d6d6"></div>
<div class="abs" style="left:0.50px;top:378px;width:1px;height:21px;background:#c4c4c4"></div>
<div class="abs" style="left:34.10px;top:378px;width:1px;height:21px;background:#d6d6d6"></div>
<div class="abs" style="left:0.50px;top:399px;width:1px;height:21px;background:#c4c4c4"></div>
<div class="abs" style="left:0.50px;top:420px;width:1px;height:21px;background:#c4c4c4"></div>
<div class="abs" style="left:0.50px;top:441px;width:1px;height:21px;background:#c4c4c4"></div>
<div class="abs" style="left:0.50px;top:462px;width:1px;height:21px;background:#c4c4c4"></div>
<div class="abs" style="left:34.10px;top:462px;width:1px;height:21px;background:#d6d6d6"></div>
<div class="abs" style="left:0.50px;top:483px;width:1px;height:21px;background:#c4c4c4"></div>
<div class="abs" style="left:34.10px;top:483px;width:1px;height:21px;background:#d6d6d6"></div>
<div class="abs" style="left:0.50px;top:504px;width:1px;height:21px;background:#c4c4c4"></div>
<div class="abs" style="left:34.10px;top:504px;width:1px;height:21px;background:#d6d6d6"></div>
<div class="abs" style="left:67.70px;top:504px;width:1px;height:21px;background:#d6d6d6"></div>
<div class="abs" style="left:0.50px;top:525px;width:1px;height:21px;background:#c4c4c4"></div>
<div class="abs" style="left:34.10px;top:525px;width:1px;height:21px;background:#d6d6d6"></div>
<div class="abs" style="left:0.50px;top:546px;width:1px;height:21px;background:#c4c4c4"></div>
<div class="abs" style="left:34.10px;top:546px;width:1px;height:21px;background:#d6d6d6"></div>
<div class="abs" style="left:67.70px;top:546px;width:1px;height:21px;background:#d6d6d6"></div>
<div class="abs" style="left:0.50px;top:567px;width:1px;height:21px;background:#c4c4c4"></div>
<div class="abs" style="left:34.10px;top:567px;width:1px;height:21px;background:#d6d6d6"></div>
<div class="abs" style="left:0.50px;top:588px;width:1px;height:21px;background:#c4c4c4"></div>
<div class="abs" style="left:34.10px;top:588px;width:1px;height:21px;background:#d6d6d6"></div>
<div class="abs" style="left:0.50px;top:609px;width:1px;height:21px;background:#c4c4c4"></div>
<div class="abs" style="left:0.50px;top:630px;width:1px;height:21px;background:#c4c4c4"></div>
<div class="abs" style="left:0.50px;top:651px;width:1px;height:21px;background:#c4c4c4"></div>
<div class="abs" style="left:0.50px;top:672px;width:1px;height:21px;background:#c4c4c4"></div>
<div class="abs" style="left:34.10px;top:672px;width:1px;height:21px;background:#d6d6d6"></div>
<div class="abs" style="left:0.50px;top:693px;width:1px;height:21px;background:#c4c4c4"></div>
<div class="abs" style="left:34.10px;top:693px;width:1px;height:21px;background:#d6d6d6"></div>
<div class="abs" style="left:0.50px;top:714px;width:1px;height:21px;background:#c4c4c4"></div>
<div class="abs" style="left:34.10px;top:714px;width:1px;height:21px;background:#d6d6d6"></div>
<div class="abs" style="left:0.50px;top:735px;width:1px;height:21px;background:#c4c4c4"></div>
<div class="abs" style="left:34.10px;top:735px;width:1px;height:21px;background:#d6d6d6"></div>
<div class="abs" style="left:67.70px;top:735px;width:1px;height:21px;background:#d6d6d6"></div>
<div class="abs" style="left:0.50px;top:756px;width:1px;height:21px;background:#c4c4c4"></div>
<div class="abs" style="left:34.10px;top:756px;width:1px;height:21px;background:#d6d6d6"></div>
<div class="abs" style="left:67.70px;top:756px;width:1px;height:21px;background:#d6d6d6"></div>
<div class="abs" style="left:101.30px;top:756px;width:1px;height:21px;background:#d6d6d6"></div>
<div class="abs" style="left:0.50px;top:777px;width:1px;height:21px;background:#c4c4c4"></div>
<div class="abs" style="left:34.10px;top:777px;width:1px;height:21px;background:#d6d6d6"></div>
<div class="abs" style="left:67.70px;top:777px;width:1px;height:21px;background:#d6d6d6"></div>
<div class="abs" style="left:101.30px;top:777px;width:1px;height:21px;background:#d6d6d6"></div>
<div class="abs" style="left:0.50px;top:798px;width:1px;height:21px;background:#c4c4c4"></div>
<div class="abs" style="left:34.10px;top:798px;width:1px;height:21px;background:#d6d6d6"></div>
<div class="abs" style="left:67.70px;top:798px;width:1px;height:21px;background:#d6d6d6"></div>
<div class="abs" style="left:0.50px;top:819px;width:1px;height:21px;background:#c4c4c4"></div>
<div class="abs" style="left:34.10px;top:819px;width:1px;height:21px;background:#d6d6d6"></div>
<div class="abs" style="left:67.70px;top:819px;width:1px;height:21px;background:#d6d6d6"></div>
<div class="abs" style="left:0.50px;top:840px;width:1px;height:21px;background:#c4c4c4"></div>
<div class="abs" style="left:34.10px;top:840px;width:1px;height:21px;background:#d6d6d6"></div>
<div class="abs" style="left:67.70px;top:840px;width:1px;height:21px;background:#d6d6d6"></div>
<div class="abs" style="left:0.50px;top:861px;width:1px;height:21px;background:#c4c4c4"></div>
<div class="abs" style="left:34.10px;top:861px;width:1px;height:21px;background:#d6d6d6"></div>
<div class="abs" style="left:0.50px;top:882px;width:1px;height:21px;background:#c4c4c4"></div>
<div class="abs" style="left:34.10px;top:882px;width:1px;height:21px;background:#d6d6d6"></div>
<div class="abs" style="left:67.70px;top:882px;width:1px;height:21px;background:#d6d6d6"></div>
<div class="abs" style="left:0.50px;top:903px;width:1px;height:21px;background:#c4c4c4"></div>
<div class="abs" style="left:34.10px;top:903px;width:1px;height:21px;background:#d6d6d6"></div>
<div class="abs" style="left:0.50px;top:924px;width:1px;height:21px;background:#c4c4c4"></div>
<div class="abs" style="left:34.10px;top:924px;width:1px;height:21px;background:#d6d6d6"></div>
<div class="abs" style="left:0.50px;top:945px;width:1px;height:21px;background:#c4c4c4"></div>
<div class="abs" style="left:34.10px;top:945px;width:1px;height:21px;background:#d6d6d6"></div>
<div class="t" style="left:0.5px;top:11.07px;color:#000"><span style="color:#0000ff">import </span>React, <span style="color:#0431fa">{ </span>useState <span style="color:#0431fa">} </span><span style="color:#0000ff">from </span><span style="color:#a31515">'react'</span></div>
<div class="t" style="left:0.5px;top:32.07px;color:#000"><span style="color:#0000ff">import </span><span style="color:#0431fa">{ </span>backend <span style="color:#0431fa">} </span><span style="color:#0000ff">from </span><span style="color:#a31515">'./wmill'</span></div>
<div class="t" style="left:0.5px;top:53.07px;color:#000"><span style="color:#0000ff">import </span><span style="color:#a31515">'./index.css'</span></div>
<div class="t" style="left:0.5px;top:74.07px;color:#000"></div>
<div class="t" style="left:0.5px;top:95.07px;color:#000"><span style="color:#0000ff">const </span>App = <span style="color:#0431fa">() </span><span style="color:#0000ff">=&gt; </span><span style="color:#0431fa">{</span></div>
<div class="t" style="left:0.5px;top:116.07px;color:#000">    <span style="color:#0000ff">const </span><span style="color:#319331">[</span>valueA, setValueA<span style="color:#319331">] </span>= useState<span style="color:#319331">&lt;</span>string | undefined<span style="color:#319331">&gt;(</span><span style="color:#0000ff">undefined</span><span style="color:#319331">)</span></div>
<div class="t" style="left:0.5px;top:137.07px;color:#000">    <span style="color:#0000ff">const </span><span style="color:#319331">[</span>valueB, setValueB<span style="color:#319331">] </span>= useState<span style="color:#319331">&lt;</span>string | undefined<span style="color:#319331">&gt;(</span><span style="color:#0000ff">undefined</span><span style="color:#319331">)</span></div>
<div class="t" style="left:0.5px;top:158.07px;color:#000">    <span style="color:#0000ff">const </span><span style="color:#319331">[</span>loadingA, setLoadingA<span style="color:#319331">] </span>= useState<span style="color:#319331">(</span><span style="color:#0000ff">false</span><span style="color:#319331">)</span></div>
<div class="t" style="left:0.5px;top:179.07px;color:#000">    <span style="color:#0000ff">const </span><span style="color:#319331">[</span>loadingB, setLoadingB<span style="color:#319331">] </span>= useState<span style="color:#319331">(</span><span style="color:#0000ff">false</span><span style="color:#319331">)</span></div>
<div class="t" style="left:0.5px;top:200.07px;color:#000">    <span style="color:#0000ff">const </span><span style="color:#319331">[</span>inputNumber, setInputNumber<span style="color:#319331">] </span>= useState<span style="color:#319331">(</span><span style="color:#098658">42</span><span style="color:#319331">)</span></div>
<div class="t" style="left:0.5px;top:221.07px;color:#000"></div>
<div class="t" style="left:0.5px;top:242.07px;color:#000">    <span style="color:#0000ff">async function </span>runA<span style="color:#319331">() {</span></div>
<div class="t" style="left:0.5px;top:263.07px;color:#000">        setLoadingA<span style="color:#7b3814">(</span><span style="color:#0000ff">true</span><span style="color:#7b3814">)</span></div>
<div class="t" style="left:0.5px;top:284.07px;color:#000">        <span style="color:#0000ff">try </span><span style="color:#7b3814">{</span></div>
<div class="t" style="left:0.5px;top:305.07px;color:#000">            setValueA<span style="color:#0431fa">(</span><span style="color:#0000ff">await </span>backend.a<span style="color:#319331">(</span><span style="color:#7b3814">{ </span>x: inputNumber <span style="color:#7b3814">}</span><span style="color:#319331">)</span><span style="color:#0431fa">)</span></div>
<div class="t" style="left:0.5px;top:326.07px;color:#000">        <span style="color:#7b3814">} </span><span style="color:#0000ff">catch </span><span style="color:#7b3814">(</span>e<span style="color:#7b3814">) {</span></div>
<div class="t" style="left:0.5px;top:347.07px;color:#000">            console.error<span style="color:#0431fa">(</span><span style="color:#a31515">'Error running a:'</span>, e<span style="color:#0431fa">)</span></div>
<div class="t" style="left:0.5px;top:368.07px;color:#000">        <span style="color:#7b3814">}</span></div>
<div class="t" style="left:0.5px;top:389.07px;color:#000">        setLoadingA<span style="color:#7b3814">(</span><span style="color:#0000ff">false</span><span style="color:#7b3814">)</span></div>
<div class="t" style="left:0.5px;top:410.07px;color:#000">    <span style="color:#319331">}</span></div>
<div class="t" style="left:0.5px;top:431.07px;color:#000"></div>
<div class="t" style="left:0.5px;top:452.07px;color:#000">    <span style="color:#0000ff">async function </span>runB<span style="color:#319331">() {</span></div>
<div class="t" style="left:0.5px;top:473.07px;color:#000">        setLoadingB<span style="color:#7b3814">(</span><span style="color:#0000ff">true</span><span style="color:#7b3814">)</span></div>
<div class="t" style="left:0.5px;top:494.07px;color:#000">        <span style="color:#0000ff">try </span><span style="color:#7b3814">{</span></div>
<div class="t" style="left:0.5px;top:515.07px;color:#000">            setValueB<span style="color:#0431fa">(</span><span style="color:#0000ff">await </span>backend.b<span style="color:#319331">(</span><span style="color:#7b3814">{ </span>format: <span style="color:#a31515">'locale' </span><span style="color:#7b3814">}</span><span style="color:#319331">)</span><span style="color:#0431fa">)</span></div>
<div class="t" style="left:0.5px;top:536.07px;color:#000">        <span style="color:#7b3814">} </span><span style="color:#0000ff">catch </span><span style="color:#7b3814">(</span>e<span style="color:#7b3814">) {</span></div>
<div class="t" style="left:0.5px;top:557.07px;color:#000">            console.error<span style="color:#0431fa">(</span><span style="color:#a31515">'Error running b:'</span>, e<span style="color:#0431fa">)</span></div>
<div class="t" style="left:0.5px;top:578.07px;color:#000">        <span style="color:#7b3814">}</span></div>
<div class="t" style="left:0.5px;top:599.07px;color:#000">        setLoadingB<span style="color:#7b3814">(</span><span style="color:#0000ff">false</span><span style="color:#7b3814">)</span></div>
<div class="t" style="left:0.5px;top:620.07px;color:#000">    <span style="color:#319331">}</span></div>
<div class="t" style="left:0.5px;top:641.07px;color:#000"></div>
<div class="t" style="left:0.5px;top:662.07px;color:#000">    <span style="color:#0000ff">async function </span>runBoth<span style="color:#319331">() {</span></div>
<div class="t" style="left:0.5px;top:683.07px;color:#000">        setLoadingA<span style="color:#7b3814">(</span><span style="color:#0000ff">true</span><span style="color:#7b3814">)</span></div>
<div class="t" style="left:0.5px;top:704.07px;color:#000">        setLoadingB<span style="color:#7b3814">(</span><span style="color:#0000ff">true</span><span style="color:#7b3814">)</span></div>
<div class="t" style="left:0.5px;top:725.07px;color:#000">        <span style="color:#0000ff">try </span><span style="color:#7b3814">{</span></div>
<div class="t" style="left:0.5px;top:746.07px;color:#000">            <span style="color:#0000ff">const </span><span style="color:#0431fa">[</span>resultA, resultB<span style="color:#0431fa">] </span>= <span style="color:#0000ff">await </span>Promise.all<span style="color:#0431fa">(</span><span style="color:#319331">[</span></div>
<div class="t" style="left:0.5px;top:767.07px;color:#000">                backend.a<span style="color:#7b3814">(</span><span style="color:#0431fa">{ </span>x: inputNumber <span style="color:#0431fa">}</span><span style="color:#7b3814">)</span>,</div>
<div class="t" style="left:0.5px;top:788.07px;color:#000">                backend.b<span style="color:#7b3814">(</span><span style="color:#0431fa">{ </span>format: <span style="color:#a31515">'iso' </span><span style="color:#0431fa">}</span><span style="color:#7b3814">)</span></div>
<div class="t" style="left:0.5px;top:809.07px;color:#000">            <span style="color:#319331">]</span><span style="color:#0431fa">)</span></div>
<div class="t" style="left:0.5px;top:830.07px;color:#000">            setValueA<span style="color:#0431fa">(</span>resultA<span style="color:#0431fa">)</span></div>
<div class="t" style="left:0.5px;top:851.07px;color:#000">            setValueB<span style="color:#0431fa">(</span>resultB<span style="color:#0431fa">)</span></div>
<div class="t" style="left:0.5px;top:872.07px;color:#000">        <span style="color:#7b3814">} </span><span style="color:#0000ff">catch </span><span style="color:#7b3814">(</span>e<span style="color:#7b3814">) {</span></div>
<div class="t" style="left:0.5px;top:893.07px;color:#000">            console.error<span style="color:#0431fa">(</span><span style="color:#a31515">'Error running both:'</span>, e<span style="color:#0431fa">)</span></div>
<div class="t" style="left:0.5px;top:914.07px;color:#000">        <span style="color:#7b3814">}</span></div>
<div class="t" style="left:0.5px;top:935.07px;color:#000">        setLoadingA<span style="color:#7b3814">(</span><span style="color:#0000ff">false</span><span style="color:#7b3814">)</span></div>
<div class="t" style="left:0.5px;top:956.07px;color:#000">        setLoadingB<span style="color:#7b3814">(</span><span style="color:#0000ff">false</span><span style="color:#7b3814">)</span></div>
</div>
<div class="abs" style="left:602.0px;top:58px;width:6px;height:951px;background:linear-gradient(to right,rgba(0,0,0,0),rgba(0,0,0,.06))"></div>
<div class="abs" style="left:612.0px;top:58px;width:68.0px;height:951px;overflow:hidden;font-family:'Liberation Mono',monospace;font-size:1.667px;-webkit-text-stroke:.13px currentColor">
<div class="t" style="left:0;top:1.00px"><span style="color:#0000ff">import</span> React, <span style="color:#0431fa">{</span> useState <span style="color:#0431fa">}</span> <span style="color:#0000ff">from</span> <span style="color:#a31515">'react'</span></div>
<div class="t" style="left:0;top:3.00px"><span style="color:#0000ff">import</span> <span style="color:#0431fa">{</span> backend <span style="color:#0431fa">}</span> <span style="color:#0000ff">from</span> <span style="color:#a31515">'./wmill'</span></div>
<div class="t" style="left:0;top:5.00px"><span style="color:#0000ff">import</span> <span style="color:#a31515">'./index.css'</span></div>
<div class="t" style="left:0;top:7.00px"></div>
<div class="t" style="left:0;top:9.00px"><span style="color:#0000ff">const</span> App = <span style="color:#0431fa">(</span><span style="color:#0431fa">)</span> <span style="color:#0000ff">=&gt;</span> <span style="color:#0431fa">{</span></div>
<div class="t" style="left:0;top:11.00px">    <span style="color:#0000ff">const</span> <span style="color:#319331">[</span>valueA, setValueA<span style="color:#319331">]</span> = useState<span style="color:#319331">&lt;</span>string | undefined<span style="color:#319331">&gt;</span><span style="color:#319331">(</span><span style="color:#0000ff">undefined</span><span style="color:#319331">)</span></div>
<div class="t" style="left:0;top:13.00px">    <span style="color:#0000ff">const</span> <span style="color:#319331">[</span>valueB, setValueB<span style="color:#319331">]</span> = useState<span style="color:#319331">&lt;</span>string | undefined<span style="color:#319331">&gt;</span><span style="color:#319331">(</span><span style="color:#0000ff">undefined</span><span style="color:#319331">)</span></div>
<div class="t" style="left:0;top:15.00px">    <span style="color:#0000ff">const</span> <span style="color:#319331">[</span>loadingA, setLoadingA<span style="color:#319331">]</span> = useState<span style="color:#319331">(</span><span style="color:#0000ff">false</span><span style="color:#319331">)</span></div>
<div class="t" style="left:0;top:17.00px">    <span style="color:#0000ff">const</span> <span style="color:#319331">[</span>loadingB, setLoadingB<span style="color:#319331">]</span> = useState<span style="color:#319331">(</span><span style="color:#0000ff">false</span><span style="color:#319331">)</span></div>
<div class="t" style="left:0;top:19.00px">    <span style="color:#0000ff">const</span> <span style="color:#319331">[</span>inputNumber, setInputNumber<span style="color:#319331">]</span> = useState<span style="color:#319331">(</span><span style="color:#098658">42</span><span style="color:#319331">)</span></div>
<div class="t" style="left:0;top:21.00px"></div>
<div class="t" style="left:0;top:23.00px">    <span style="color:#0000ff">async</span> <span style="color:#0000ff">function</span> runA<span style="color:#319331">(</span><span style="color:#319331">)</span> <span style="color:#319331">{</span></div>
<div class="t" style="left:0;top:25.00px">        setLoadingA<span style="color:#7b3814">(</span><span style="color:#0000ff">true</span><span style="color:#7b3814">)</span></div>
<div class="t" style="left:0;top:27.00px">        <span style="color:#0000ff">try</span> <span style="color:#7b3814">{</span></div>
<div class="t" style="left:0;top:29.00px">            setValueA<span style="color:#0431fa">(</span><span style="color:#0000ff">await</span> backend.a<span style="color:#319331">(</span><span style="color:#7b3814">{</span> x: inputNumber <span style="color:#7b3814">}</span><span style="color:#319331">)</span><span style="color:#0431fa">)</span></div>
<div class="t" style="left:0;top:31.00px">        <span style="color:#7b3814">}</span> <span style="color:#0000ff">catch</span> <span style="color:#7b3814">(</span>e<span style="color:#7b3814">)</span> <span style="color:#7b3814">{</span></div>
<div class="t" style="left:0;top:33.00px">            console.error<span style="color:#0431fa">(</span><span style="color:#a31515">'Error running a:'</span>, e<span style="color:#0431fa">)</span></div>
<div class="t" style="left:0;top:35.00px">        <span style="color:#7b3814">}</span></div>
<div class="t" style="left:0;top:37.00px">        setLoadingA<span style="color:#7b3814">(</span><span style="color:#0000ff">false</span><span style="color:#7b3814">)</span></div>
<div class="t" style="left:0;top:39.00px">    <span style="color:#319331">}</span></div>
<div class="t" style="left:0;top:41.00px"></div>
<div class="t" style="left:0;top:43.00px">    <span style="color:#0000ff">async</span> <span style="color:#0000ff">function</span> runB<span style="color:#319331">(</span><span style="color:#319331">)</span> <span style="color:#319331">{</span></div>
<div class="t" style="left:0;top:45.00px">        setLoadingB<span style="color:#7b3814">(</span><span style="color:#0000ff">true</span><span style="color:#7b3814">)</span></div>
<div class="t" style="left:0;top:47.00px">        <span style="color:#0000ff">try</span> <span style="color:#7b3814">{</span></div>
<div class="t" style="left:0;top:49.00px">            setValueB<span style="color:#0431fa">(</span><span style="color:#0000ff">await</span> backend.b<span style="color:#319331">(</span><span style="color:#7b3814">{</span> format: <span style="color:#a31515">'locale'</span> <span style="color:#7b3814">}</span><span style="color:#319331">)</span><span style="color:#0431fa">)</span></div>
<div class="t" style="left:0;top:51.00px">        <span style="color:#7b3814">}</span> <span style="color:#0000ff">catch</span> <span style="color:#7b3814">(</span>e<span style="color:#7b3814">)</span> <span style="color:#7b3814">{</span></div>
<div class="t" style="left:0;top:53.00px">            console.error<span style="color:#0431fa">(</span><span style="color:#a31515">'Error running b:'</span>, e<span style="color:#0431fa">)</span></div>
<div class="t" style="left:0;top:55.00px">        <span style="color:#7b3814">}</span></div>
<div class="t" style="left:0;top:57.00px">        setLoadingB<span style="color:#7b3814">(</span><span style="color:#0000ff">false</span><span style="color:#7b3814">)</span></div>
<div class="t" style="left:0;top:59.00px">    <span style="color:#319331">}</span></div>
<div class="t" style="left:0;top:61.00px"></div>
<div class="t" style="left:0;top:63.00px">    <span style="color:#0000ff">async</span> <span style="color:#0000ff">function</span> runBoth<span style="color:#319331">(</span><span style="color:#319331">)</span> <span style="color:#319331">{</span></div>
<div class="t" style="left:0;top:65.00px">        setLoadingA<span style="color:#7b3814">(</span><span style="color:#0000ff">true</span><span style="color:#7b3814">)</span></div>
<div class="t" style="left:0;top:67.00px">        setLoadingB<span style="color:#7b3814">(</span><span style="color:#0000ff">true</span><span style="color:#7b3814">)</span></div>
<div class="t" style="left:0;top:69.00px">        <span style="color:#0000ff">try</span> <span style="color:#7b3814">{</span></div>
<div class="t" style="left:0;top:71.00px">            <span style="color:#0000ff">const</span> <span style="color:#0431fa">[</span>resultA, resultB<span style="color:#0431fa">]</span> = <span style="color:#0000ff">await</span> Promise.all<span style="color:#0431fa">(</span><span style="color:#319331">[</span></div>
<div class="t" style="left:0;top:73.00px">                backend.a<span style="color:#7b3814">(</span><span style="color:#0431fa">{</span> x: inputNumber <span style="color:#0431fa">}</span><span style="color:#7b3814">)</span>,</div>
<div class="t" style="left:0;top:75.00px">                backend.b<span style="color:#7b3814">(</span><span style="color:#0431fa">{</span> format: <span style="color:#a31515">'iso'</span> <span style="color:#0431fa">}</span><span style="color:#7b3814">)</span></div>
<div class="t" style="left:0;top:77.00px">            <span style="color:#319331">]</span><span style="color:#0431fa">)</span></div>
<div class="t" style="left:0;top:79.00px">            setValueA<span style="color:#0431fa">(</span>resultA<span style="color:#0431fa">)</span></div>
<div class="t" style="left:0;top:81.00px">            setValueB<span style="color:#0431fa">(</span>resultB<span style="color:#0431fa">)</span></div>
<div class="t" style="left:0;top:83.00px">        <span style="color:#7b3814">}</span> <span style="color:#0000ff">catch</span> <span style="color:#7b3814">(</span>e<span style="color:#7b3814">)</span> <span style="color:#7b3814">{</span></div>
<div class="t" style="left:0;top:85.00px">            console.error<span style="color:#0431fa">(</span><span style="color:#a31515">'Error running both:'</span>, e<span style="color:#0431fa">)</span></div>
<div class="t" style="left:0;top:87.00px">        <span style="color:#7b3814">}</span></div>
<div class="t" style="left:0;top:89.00px">        setLoadingA<span style="color:#7b3814">(</span><span style="color:#0000ff">false</span><span style="color:#7b3814">)</span></div>
<div class="t" style="left:0;top:91.00px">        setLoadingB<span style="color:#7b3814">(</span><span style="color:#0000ff">false</span><span style="color:#7b3814">)</span></div>
<div class="t" style="left:0;top:93.00px">    <span style="color:#319331">}</span></div>
<div class="t" style="left:0;top:95.00px"></div>
<div class="t" style="left:0;top:97.00px">    <span style="color:#0000ff">return</span> <span style="color:#319331">(</span></div>
<div class="t" style="left:0;top:99.00px">        <span style="color:#800000">&lt;</span><span style="color:#800000">div</span> <span style="color:#e50000">className</span>=<span style="color:#a31515">"container"</span><span style="color:#800000">&gt;</span></div>
<div class="t" style="left:0;top:101.00px">            <span style="color:#800000">&lt;</span><span style="color:#800000">h1</span><span style="color:#800000">&gt;</span>Full-code app demo<span style="color:#800000">&lt;</span><span style="color:#800000">/</span><span style="color:#800000">h1</span><span style="color:#800000">&gt;</span></div>
<div class="t" style="left:0;top:103.00px">            <span style="color:#800000">&lt;</span><span style="color:#800000">p</span> <span style="color:#e50000">className</span>=<span style="color:#a31515">"subtitle"</span><span style="color:#800000">&gt;</span>Calling <span style="color:#098658">2</span> backend runnables<span style="color:#800000">&lt;</span><span style="color:#800000">/</span><span style="color:#800000">p</span><span style="color:#800000">&gt;</span></div>
<div class="t" style="left:0;top:105.00px"></div>
<div class="t" style="left:0;top:107.00px">            <span style="color:#800000">&lt;</span><span style="color:#800000">div</span> <span style="color:#e50000">className</span>=<span style="color:#a31515">"input-section"</span><span style="color:#800000">&gt;</span></div>
<div class="t" style="left:0;top:109.00px">                <span style="color:#800000">&lt;</span><span style="color:#800000">label</span><span style="color:#800000">&gt;</span></div>
<div class="t" style="left:0;top:111.00px">                    Input number:</div>
<div class="t" style="left:0;top:113.00px">                    <span style="color:#800000">&lt;</span><span style="color:#800000">input</span></div>
<div class="t" style="left:0;top:115.00px">                        type=<span style="color:#a31515">"number"</span></div>
<div class="t" style="left:0;top:117.00px">                        value=<span style="color:#7b3814">{</span>inputNumber<span style="color:#7b3814">}</span></div>
<div class="t" style="left:0;top:119.00px">                        onChange=<span style="color:#7b3814">{</span><span style="color:#0431fa">(</span>e<span style="color:#0431fa">)</span> <span style="color:#0000ff">=&gt;</span> setInputNumber<span style="color:#0431fa">(</span>Number<span style="color:#319331">(</span>e.target.value<span style="color:#319331">)</span><span style="color:#0431fa">)</span><span style="color:#7b3814">}</span></div>
<div class="t" style="left:0;top:121.00px">                    /&gt;</div>
<div class="t" style="left:0;top:123.00px">                <span style="color:#800000">&lt;</span><span style="color:#800000">/</span><span style="color:#800000">label</span><span style="color:#800000">&gt;</span></div>
<div class="t" style="left:0;top:125.00px">            <span style="color:#800000">&lt;</span><span style="color:#800000">/</span><span style="color:#800000">div</span><span style="color:#800000">&gt;</span></div>
<div class="t" style="left:0;top:127.00px"></div>
<div class="t" style="left:0;top:129.00px">            <span style="color:#800000">&lt;</span><span style="color:#800000">div</span> <span style="color:#e50000">className</span>=<span style="color:#a31515">"buttons"</span><span style="color:#800000">&gt;</span></div>
<div class="t" style="left:0;top:131.00px">                <span style="color:#800000">&lt;</span><span style="color:#800000">button</span> <span style="color:#e50000">onClick</span>=<span style="color:#7b3814">{</span>runA<span style="color:#7b3814">}</span> <span style="color:#e50000">disabled</span>=<span style="color:#7b3814">{</span>loadingA<span style="color:#7b3814">}</span><span style="color:#800000">&gt;</span></div>
<div class="t" style="left:0;top:133.00px">                    <span style="color:#7b3814">{</span>loadingA ? <span style="color:#a31515">'Running...'</span> : <span style="color:#a31515">'Multiply number'</span><span style="color:#7b3814">}</span></div>
<div class="t" style="left:0;top:135.00px">                <span style="color:#800000">&lt;</span><span style="color:#800000">/</span><span style="color:#800000">button</span><span style="color:#800000">&gt;</span></div>
<div class="t" style="left:0;top:137.00px">                <span style="color:#800000">&lt;</span><span style="color:#800000">button</span> <span style="color:#e50000">onClick</span>=<span style="color:#7b3814">{</span>runB<span style="color:#7b3814">}</span> <span style="color:#e50000">disabled</span>=<span style="color:#7b3814">{</span>loadingB<span style="color:#7b3814">}</span><span style="color:#800000">&gt;</span></div>
<div class="t" style="left:0;top:139.00px">                    <span style="color:#7b3814">{</span>loadingB ? <span style="color:#a31515">'Running...'</span> : <span style="color:#a31515">'Get timestamp'</span><span style="color:#7b3814">}</span></div>
<div class="t" style="left:0;top:141.00px">                <span style="color:#800000">&lt;</span><span style="color:#800000">/</span><span style="color:#800000">button</span><span style="color:#800000">&gt;</span></div>
<div class="t" style="left:0;top:143.00px">                <span style="color:#800000">&lt;</span><span style="color:#800000">button</span> <span style="color:#e50000">onClick</span>=<span style="color:#7b3814">{</span>runBoth<span style="color:#7b3814">}</span> <span style="color:#e50000">disabled</span>=<span style="color:#7b3814">{</span>loadingA || loadingB<span style="color:#7b3814">}</span><span style="color:#800000">&gt;</span></div>
<div class="t" style="left:0;top:145.00px">                    Run both</div>
<div class="t" style="left:0;top:147.00px">                <span style="color:#800000">&lt;</span><span style="color:#800000">/</span><span style="color:#800000">button</span><span style="color:#800000">&gt;</span></div>
<div class="t" style="left:0;top:149.00px">            <span style="color:#800000">&lt;</span><span style="color:#800000">/</span><span style="color:#800000">div</span><span style="color:#800000">&gt;</span></div>
<div class="t" style="left:0;top:151.00px"></div>
<div class="t" style="left:0;top:153.00px">            <span style="color:#800000">&lt;</span><span style="color:#800000">div</span> <span style="color:#e50000">className</span>=<span style="color:#a31515">"results"</span><span style="color:#800000">&gt;</span></div>
<div class="t" style="left:0;top:155.00px">                <span style="color:#800000">&lt;</span><span style="color:#800000">div</span> <span style="color:#e50000">className</span>=<span style="color:#a31515">"result-card"</span><span style="color:#800000">&gt;</span></div>
<div class="t" style="left:0;top:157.00px">                    <span style="color:#800000">&lt;</span><span style="color:#800000">h3</span><span style="color:#800000">&gt;</span>Multiply <span style="color:#7b3814">(</span>TypeScript<span style="color:#7b3814">)</span><span style="color:#800000">&lt;</span><span style="color:#800000">/</span><span style="color:#800000">h3</span><span style="color:#800000">&gt;</span></div>
<div class="t" style="left:0;top:159.00px">                    <span style="color:#800000">&lt;</span><span style="color:#800000">div</span> <span style="color:#e50000">className</span>=<span style="color:#a31515">"result-value"</span><span style="color:#800000">&gt;</span></div>
<div class="t" style="left:0;top:161.00px">                        <span style="color:#7b3814">{</span>loadingA ? <span style="color:#a31515">'Loading...'</span> : valueA ?? <span style="color:#a31515">'Click a button'</span><span style="color:#7b3814">}</span></div>
<div class="t" style="left:0;top:163.00px">                    <span style="color:#800000">&lt;</span><span style="color:#800000">/</span><span style="color:#800000">div</span><span style="color:#800000">&gt;</span></div>
<div class="t" style="left:0;top:165.00px">                <span style="color:#800000">&lt;</span><span style="color:#800000">/</span><span style="color:#800000">div</span><span style="color:#800000">&gt;</span></div>
<div class="t" style="left:0;top:167.00px"></div>
<div class="t" style="left:0;top:169.00px">                <span style="color:#800000">&lt;</span><span style="color:#800000">div</span> <span style="color:#e50000">className</span>=<span style="color:#a31515">"result-card"</span><span style="color:#800000">&gt;</span></div>
<div class="t" style="left:0;top:171.00px">                    <span style="color:#800000">&lt;</span><span style="color:#800000">h3</span><span style="color:#800000">&gt;</span>Timestamp <span style="color:#7b3814">(</span>Python<span style="color:#7b3814">)</span><span style="color:#800000">&lt;</span><span style="color:#800000">/</span><span style="color:#800000">h3</span><span style="color:#800000">&gt;</span></div>
<div class="t" style="left:0;top:173.00px">                    <span style="color:#800000">&lt;</span><span style="color:#800000">div</span> <span style="color:#e50000">className</span>=<span style="color:#a31515">"result-value"</span><span style="color:#800000">&gt;</span></div>
<div class="t" style="left:0;top:175.00px">                        <span style="color:#7b3814">{</span>loadingB ? <span style="color:#a31515">'Loading...'</span> : valueB ?? <span style="color:#a31515">'Click a button'</span><span style="color:#7b3814">}</span></div>
<div class="t" style="left:0;top:177.00px">                    <span style="color:#800000">&lt;</span><span style="color:#800000">/</span><span style="color:#800000">div</span><span style="color:#800000">&gt;</span></div>
<div class="t" style="left:0;top:179.00px">                <span style="color:#800000">&lt;</span><span style="color:#800000">/</span><span style="color:#800000">div</span><span style="color:#800000">&gt;</span></div>
<div class="t" style="left:0;top:181.00px">            <span style="color:#800000">&lt;</span><span style="color:#800000">/</span><span style="color:#800000">div</span><span style="color:#800000">&gt;</span></div>
<div class="t" style="left:0;top:183.00px">        <span style="color:#800000">&lt;</span><span style="color:#800000">/</span><span style="color:#800000">div</span><span style="color:#800000">&gt;</span></div>
<div class="t" style="left:0;top:185.00px">    <span style="color:#319331">)</span></div>
<div class="t" style="left:0;top:187.00px"><span style="color:#0431fa">}</span></div>
<div class="t" style="left:0;top:189.00px"></div>
<div class="t" style="left:0;top:191.00px"><span style="color:#0000ff">export</span> <span style="color:#0000ff">default</span> App</div>
</div>
<div class="abs" style="left:680.0px;top:58px;width:.5px;height:951px;background:#e6e6e6"></div>
<div class="abs" style="left:680.5px;top:701px;width:12px;height:2px;background:#444"></div>
</div>
<div id="splitter"></div>
<div id="preview">
<div id="pbody"><h1>Full-code app demo</h1><p>Calling 2 backend runnables</p><div>Input number:<span class="inp">42</span></div><div class="btns"><span class="b">Multiply number</span><span class="b">Get timestamp</span><span class="b">Run both</span></div><h3>Multiply (TypeScript)</h3><div>Result: 42 × 2 = 84</div><h3>Timestamp (Python)</h3><div>2026-02-18T15:24:32.829968</div></div>
<div class="abs" style="left:504.5px;top:3px;width:66.5px;height:24px;background:#e5e7eb;border-radius:6px"></div>
<div class="t" style="left:513.00px;top:15.65px;font-size:12px;font-family:'Liberation Mono',monospace;color:#111;">esbuild</div>
<div class="abs" style="left:579px;top:-0.14999999999999858px;width:30px;height:30px;background:#e5e7eb;border-radius:5px"></div>
<div class="abs" style="left:617px;top:1px;width:27.8px;height:27.8px;background:#e5e7eb;border-radius:5px"></div>
<div class="abs" style="left:653px;top:1px;width:27.8px;height:27.8px;background:#e5e7eb;border-radius:5px"></div>
<svg class="i" viewBox="0 0 24 24" style="left:586.85px;top:7.85px;width:14.3px;height:14.3px;color:#000;" stroke-width="2.1" ><path d="M12.034 12.681a.498.498 0 0 1 .647-.647l9 3.5a.5.5 0 0 1-.033.943l-3.444 1.068a1 1 0 0 0-.66.66l-1.067 3.443a.5.5 0 0 1-.943.033z"/><path d="M5 3a2 2 0 0 0-2 2"/><path d="M19 3a2 2 0 0 1 2 2"/><path d="M5 21a2 2 0 0 1-2-2"/><path d="M9 3h1"/><path d="M9 21h2"/><path d="M14 3h1"/><path d="M3 9v1"/><path d="M21 9v2"/><path d="M3 14v1"/></svg>
<svg class="i" viewBox="0 0 24 24" style="left:625.0px;top:8.799999999999997px;width:12px;height:12px;color:#000;" stroke-width="2.4" ><path d="M21 13v6a2 2 0 0 1-2 2H5a2 2 0 0 1-2-2V5a2 2 0 0 1 2-2h6"/><path d="m21 3-9 9"/><path d="M15 3h6v6"/></svg>
<svg class="i" viewBox="0 0 24 24" style="left:661.0px;top:8.799999999999997px;width:12px;height:12px;color:#000;" stroke-width="2.4" ><path d="M3 12a9 9 0 0 1 9-9 9.75 9.75 0 0 1 6.74 2.74L21 8"/><path d="M21 3v5h-5"/><path d="M21 12a9 9 0 0 1-9 9 9.75 9.75 0 0 1-6.74-2.74L3 16"/><path d="M8 16H3v5"/></svg>
<div class="abs" style="left:189.5px;top:769.35px;width:499.5px;height:300px;background:#fafafc;border:1px solid #e4e6eb;border-radius:4px;overflow:hidden">
<div class="abs" style="left:0;top:17.149999999999977px;width:600px;height:221.5px;overflow:hidden;font-family:'Liberation Mono',monospace;font-size:12px;color:#343d4e">
<div class="t" style="left:4.0px;top:1.20px">[esbuild] Build successful in 0.45s</div>
<div class="t" style="left:4.0px;top:49.20px">Change /App.tsx detected, 1s debounce on rebuild</div>
<div class="t" style="left:4.0px;top:81.20px">[esbuild] Build started...</div>
<div class="t" style="left:4.0px;top:97.20px">[esbuild] Build successful in 0.27s</div>
<div class="t" style="left:4.0px;top:145.20px">Change /App.tsx detected, 1s debounce on rebuild</div>
<div class="t" style="left:4.0px;top:177.20px">[esbuild] Build started...</div>
<div class="t" style="left:4.0px;top:193.20px">[esbuild] Build successful in 0.27s</div>
<div class="t" style="left:4.0px;top:241.20px">Change /App.tsx detected, 1s debounce on rebuild</div>
</div>
<div class="t" style="left:12.10px;top:9.94px;font-size:12px;color:#343d4e;">Logs</div>
<svg class="abs" style="left:49.0px;top:7.949999999999932px;width:6.8px;height:3.4px;overflow:visible" viewBox="0 0 6.8 3.4"><path d="M0 0L3.4 3.4L6.8 0" stroke="#343d4e" stroke-width=".75" fill="none"/></svg>
<div class="t" style="left:67.90px;top:9.94px;font-size:12px;color:#8d96a5;">(327)</div>
</div>
</div>
</body></html>
